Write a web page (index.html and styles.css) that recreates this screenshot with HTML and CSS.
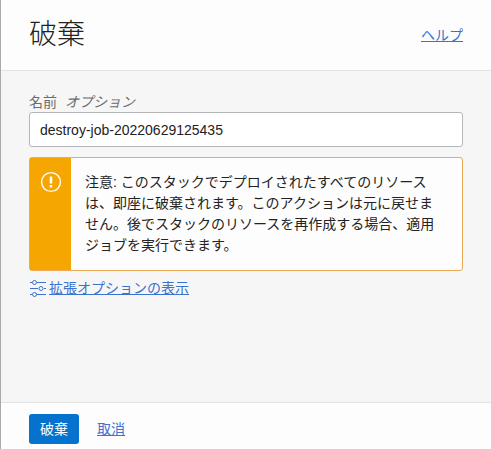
FILE: index.html
```html
<!DOCTYPE html>
<html lang="ja">
<head>
  <meta charset="UTF-8">
  <meta name="viewport" content="width=device-width, initial-scale=1.0">
  <title>破棄</title>
  <link rel="stylesheet" href="styles.css">
</head>
<body>
  <div class="panel">
    <header class="panel-header">
      <h1>破棄</h1>
      <a href="#">ヘルプ</a>
    </header>

    <main class="panel-body">
      <label for="jobName">名前 <em>オプション</em></label>
      <input type="text" id="jobName" value="destroy-job-20220629125435">

      <div class="alert" role="alert">
        <div class="alert-icon">
          <svg width="22" height="22" viewBox="0 0 22 22" fill="none" stroke="#fff" aria-hidden="true">
            <circle cx="11" cy="11" r="9.4" stroke-width="1.4"/>
            <path d="M11 5.4v7.2M11 14v2.4" stroke-width="2.6"/>
          </svg>
        </div>
        <p>注意: このスタックでデプロイされたすべてのリソースは、即座に破棄されます。このアクションは元に戻せません。後でスタックのリソースを再作成する場合、適用ジョブを実行できます。</p>
      </div>

      <div class="advanced">
        <svg width="18" height="18" viewBox="0 0 18 18" fill="none" stroke="#3a72d0" aria-hidden="true">
          <path d="M1 2.5h2M8 2.5h9M1 8.5h8M15 8.5h2M1 14.5h2M8 14.5h9"/>
          <circle cx="5.5" cy="2.5" r="2"/>
          <circle cx="12" cy="8.5" r="2"/>
          <circle cx="5.5" cy="14.5" r="2"/>
        </svg>
        <a href="#">拡張オプションの表示</a>
      </div>
    </main>

    <footer class="panel-footer">
      <button type="button">破棄</button>
      <a href="#">取消</a>
    </footer>
  </div>
</body>
</html>
```
FILE: styles.css
```css
* {
  box-sizing: border-box;
}
body {
  margin: 0;
  font-family: "Liberation Sans", "Noto Sans CJK JP", sans-serif;
  font-size: 14px;
  line-height: 21px;
  color: #222;
}
a {
  color: #3a72d0;
  text-decoration: underline;
}
.panel {
  display: flex;
  flex-direction: column;
  min-height: 100vh;
  background: #f6f6f6;
  border-left: 1px solid #a9a9a9;
}
.panel-header {
  display: flex;
  align-items: center;
  justify-content: space-between;
  padding: 14px 28px;
  background: #fdfdfd;
  border-bottom: 1px solid #e2e2e2;
}
h1 {
  margin: 0;
  font-size: 28px;
  font-weight: 300;
  line-height: 42px;
}
.panel-body {
  flex: 1;
  padding: 21px 28px;
}
label {
  display: block;
  line-height: 20px;
  color: #6b6b6b;
}
label em {
  margin-left: 4px;
}
input {
  display: block;
  width: 100%;
  height: 35px;
  padding: 0 10px;
  font: inherit;
  color: #222;
  background: #fff;
  border: 1px solid #b4b7b7;
  border-radius: 3px;
}
.alert {
  display: flex;
  margin: 10px 0 7px;
  background: #fdfdfd;
  border: 1px solid #eda958;
  border-radius: 3px;
}
.alert-icon {
  flex: none;
  width: 41px;
  padding: 13px 0 0 10px;
  background: #f5a600;
}
.alert p {
  margin: 0;
  padding: 14px 16px 14px 14px;
}
.advanced {
  display: flex;
  align-items: center;
  gap: 2px;
}
.panel-footer {
  display: flex;
  align-items: center;
  gap: 18px;
  padding: 11px 28px 5px;
  background: #fdfdfd;
  border-top: 1px solid #e2e2e2;
}
button {
  height: 30px;
  padding: 0 11px;
  font: inherit;
  color: #fff;
  background: #0572ce;
  border: 0;
  border-radius: 3px;
}
```
